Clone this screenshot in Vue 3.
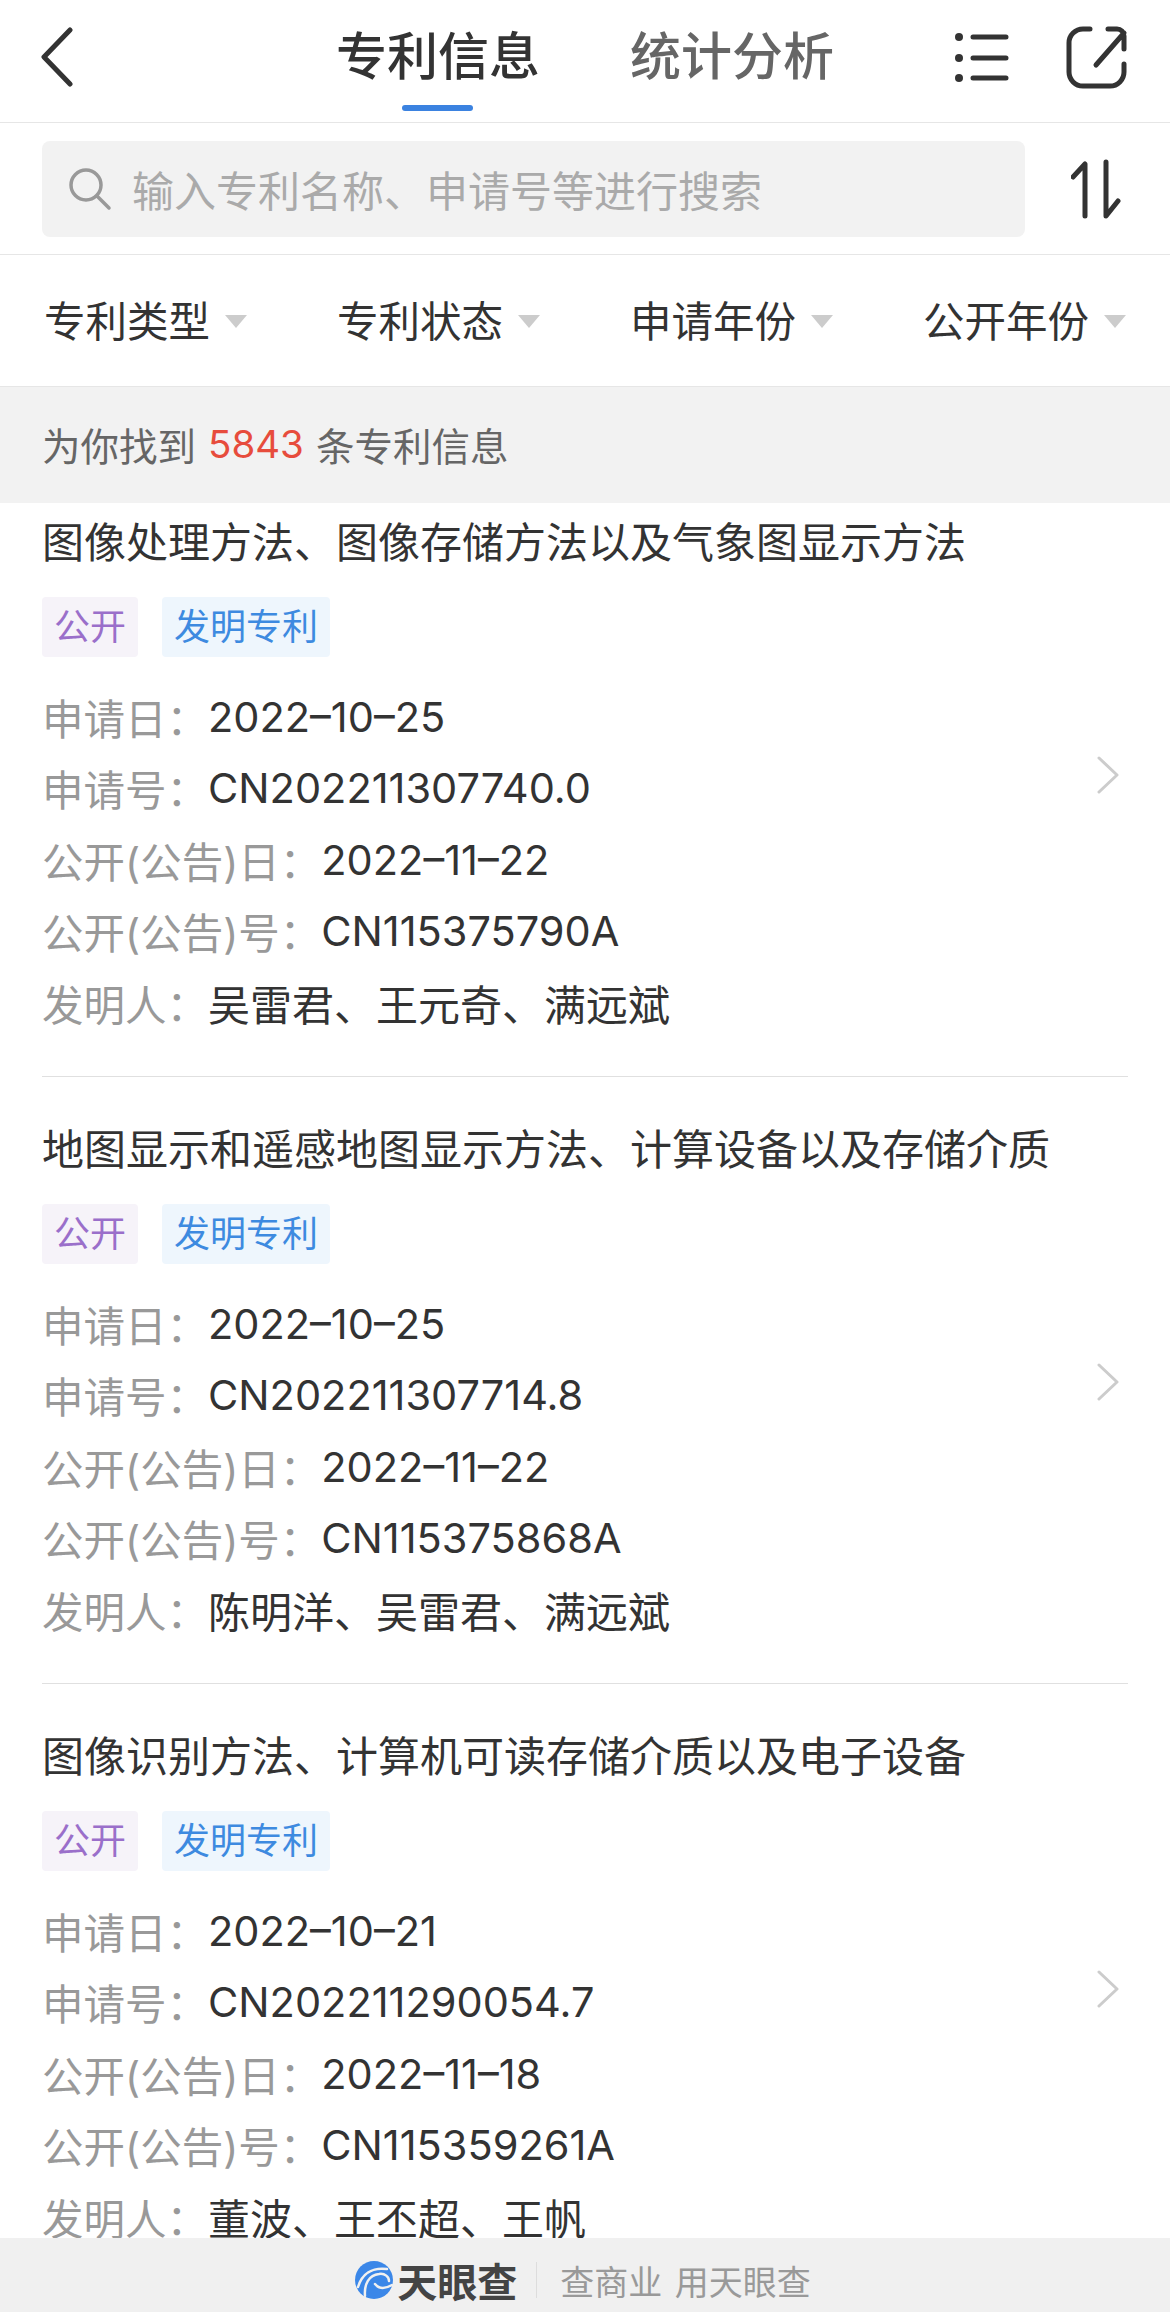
<script setup>
const filters = ['专利类型', '专利状态', '申请年份', '公开年份']

const patents = [
  {
    title: '图像处理方法、图像存储方法以及气象图显示方法',
    appDate: '2022–10–25',
    appNo: 'CN202211307740.0',
    pubDate: '2022–11–22',
    pubNo: 'CN115375790A',
    inventors: '吴雷君、王元奇、满远斌',
  },
  {
    title: '地图显示和遥感地图显示方法、计算设备以及存储介质',
    appDate: '2022–10–25',
    appNo: 'CN202211307714.8',
    pubDate: '2022–11–22',
    pubNo: 'CN115375868A',
    inventors: '陈明洋、吴雷君、满远斌',
  },
  {
    title: '图像识别方法、计算机可读存储介质以及电子设备',
    appDate: '2022–10–21',
    appNo: 'CN202211290054.7',
    pubDate: '2022–11–18',
    pubNo: 'CN115359261A',
    inventors: '董波、王丕超、王帆',
  },
]
</script>

<template>
  <div class="page">
    <header class="topbar">
      <svg class="back" width="34" height="60" viewBox="0 0 34 60">
        <path d="M30 3 L4 30 L30 57" />
      </svg>
      <nav class="tabs">
        <div class="tab active">专利信息</div>
        <div class="tab">统计分析</div>
      </nav>
      <div class="actions">
        <svg width="60" height="60" viewBox="0 0 60 60" class="list-icon">
          <circle cx="6" cy="9" r="4" />
          <circle cx="6" cy="30" r="4" />
          <circle cx="6" cy="50" r="4" />
          <path d="M20 9 H53 M20 30 H53 M20 50 H53" />
        </svg>
        <svg width="64" height="64" viewBox="0 0 64 64" class="share-icon">
          <path d="M26 4 H19 A14 14 0 0 0 5 18 V47 A14 14 0 0 0 19 61 H46 A14 14 0 0 0 60 47 V39" />
          <path d="M32 40 L60 8 M44 4 H53 A7 7 0 0 1 60 11 V24" />
        </svg>
      </div>
    </header>

    <div class="search-row">
      <div class="search">
        <svg width="44" height="44" viewBox="0 0 44 44" class="search-icon">
          <circle cx="18" cy="18" r="15" />
          <path d="M29 29 L41 41" />
        </svg>
        <span>输入专利名称、申请号等进行搜索</span>
      </div>
      <svg width="50" height="60" viewBox="0 0 50 60" class="sort-icon">
        <path d="M2 18 L14 5 V57 M35 3 V57 L47 42" />
      </svg>
    </div>

    <div class="filters">
      <div v-for="f in filters" :key="f" class="filter">
        <span>{{ f }}</span>
        <i class="caret"></i>
      </div>
    </div>

    <div class="count">为你找到 <em>5843</em> 条专利信息</div>

    <main class="list">
      <article v-for="p in patents" :key="p.appNo" class="item">
        <h2 class="title">{{ p.title }}</h2>
        <div class="tags">
          <span class="tag purple">公开</span>
          <span class="tag blue">发明专利</span>
        </div>
        <div class="row"><label>申请日：</label><span>{{ p.appDate }}</span></div>
        <div class="row"><label>申请号：</label><span>{{ p.appNo }}</span></div>
        <div class="row"><label>公开(公告)日：</label><span>{{ p.pubDate }}</span></div>
        <div class="row"><label>公开(公告)号：</label><span>{{ p.pubNo }}</span></div>
        <div class="row names"><label>发明人：</label><span>{{ p.inventors }}</span></div>
        <svg class="chevron" width="24" height="38" viewBox="0 0 24 38">
          <path d="M3 2 L21 19 L3 36" />
        </svg>
      </article>
    </main>

    <footer class="footer">
      <svg width="40" height="40" viewBox="0 0 40 40" class="logo">
        <circle cx="20" cy="20" r="19" fill="#3b87e8" />
        <path d="M4 27 C8 14 18 7 33 9" />
        <path d="M11 36 C10 24 15 15 25 14 C31 13 35 17 35 21" />
        <path d="M21 24 C25 29 31 29 38 25" />
      </svg>
      <b class="brand">天眼查</b>
      <i class="sep"></i>
      <span class="slogan">查商业 用天眼查</span>
    </footer>
  </div>
</template>

<style>
html, body {
  margin: 0;
  background: #fff;
}
</style>

<style scoped>
.page {
  width: 1170px;
  height: 2312px;
  display: flex;
  flex-direction: column;
  overflow: hidden;
  font-family: Inter, "Noto Sans CJK SC", sans-serif;
  color: #333;
}

.topbar {
  height: 122px;
  flex: none;
  padding: 0 42px;
  display: grid;
  grid-template-columns: 1fr auto 1fr;
  border-bottom: 1px solid #e6e6e6;
}
.back {
  margin-top: 27px;
  margin-left: -2px;
}
.back path {
  fill: none;
  stroke: #333;
  stroke-width: 5;
  stroke-linecap: round;
  stroke-linejoin: round;
}
.tabs {
  display: flex;
  gap: 90px;
}
.tab {
  position: relative;
  font-size: 51px;
  line-height: 60px;
  margin-top: 27px;
  font-weight: 500;
  color: #666;
}
.tab.active {
  color: #333;
}
.tab.active::after {
  content: "";
  position: absolute;
  left: 66px;
  top: 78px;
  width: 71px;
  height: 6px;
  border-radius: 3px;
  background: #3b82e0;
}
.actions {
  display: flex;
  justify-content: flex-end;
  gap: 51px;
}
.list-icon {
  margin-top: 28px;
}
.list-icon circle {
  fill: #333;
}
.list-icon path,
.share-icon path,
.sort-icon path {
  fill: none;
  stroke: #333;
  stroke-width: 5;
  stroke-linecap: round;
  stroke-linejoin: round;
}
.share-icon {
  margin-top: 25px;
}

.search-row {
  height: 131px;
  flex: none;
  padding: 0 49px 0 42px;
  display: flex;
  align-items: center;
  justify-content: space-between;
  border-bottom: 1px solid #e6e6e6;
}
.search {
  width: 983px;
  height: 96px;
  box-sizing: border-box;
  padding-left: 26px;
  display: flex;
  align-items: center;
  gap: 20px;
  border-radius: 8px;
  background: #f2f2f2;
  font-size: 42px;
  color: #aaa;
}
.search-icon circle,
.search-icon path {
  fill: none;
  stroke: #999;
  stroke-width: 3.5;
  stroke-linecap: round;
}

.filters {
  height: 132px;
  flex: none;
  box-sizing: border-box;
  padding: 2px 44px 0;
  display: flex;
  align-items: center;
  justify-content: space-between;
  border-bottom: 1px solid #e6e6e6;
}
.filter {
  display: flex;
  align-items: center;
  gap: 15px;
  font-size: 41.5px;
  line-height: 50px;
}
.caret {
  width: 0;
  height: 0;
  border-left: 11px solid transparent;
  border-right: 11px solid transparent;
  border-top: 13px solid #ccc;
}

.count {
  height: 116px;
  flex: none;
  box-sizing: border-box;
  padding: 0 0 2px 42px;
  display: flex;
  align-items: center;
  gap: 12px;
  background: #f2f2f2;
  font-size: 38.5px;
  color: #666;
}
.count em {
  font-style: normal;
  color: #e74c3c;
}

.list {
  flex: 1;
  min-height: 0;
  overflow: hidden;
  padding: 15px 42px 0;
}
.item {
  position: relative;
  height: 558px;
  margin-bottom: 48px;
  border-bottom: 1px solid #e0e0e0;
}
.title {
  margin: 0 0 29px;
  font-size: 42px;
  line-height: 50px;
  font-weight: 400;
}
.tags {
  display: flex;
  gap: 24px;
  margin-bottom: 24px;
}
.tag {
  height: 60px;
  padding: 0 12px;
  font-size: 36px;
  line-height: 60px;
  border-radius: 4px;
}
.purple {
  color: #9a6fca;
  background: #f6f3f9;
}
.blue {
  color: #3d8ae0;
  background: #eef6fd;
}
.row {
  display: flex;
  height: 71.5px;
  align-items: center;
  font-size: 41.5px;
}
.row.names span {
  font-size: 42px;
}
.row label {
  color: #999;
}
.chevron {
  position: absolute;
  right: 8px;
  top: 238px;
}
.chevron path {
  fill: none;
  stroke: #ccc;
  stroke-width: 3;
  stroke-linecap: round;
  stroke-linejoin: round;
}

.footer {
  height: 74px;
  padding: 10px 5px 0 0;
  box-sizing: border-box;
  flex: none;
  display: flex;
  align-items: center;
  justify-content: center;
  background: #f0f0f0;
  color: #999;
}
.logo path {
  fill: none;
  stroke: #f0f0f0;
  stroke-width: 2.5;
  stroke-linecap: round;
}
.brand {
  margin-left: 3px;
  font-size: 40px;
  font-weight: 700;
  color: #444;
}
.sep {
  width: 1px;
  height: 36px;
  margin: 0 23px 0 19px;
  background: #ddd;
}
.slogan {
  font-size: 34px;
  word-spacing: 3px;
}
</style>
